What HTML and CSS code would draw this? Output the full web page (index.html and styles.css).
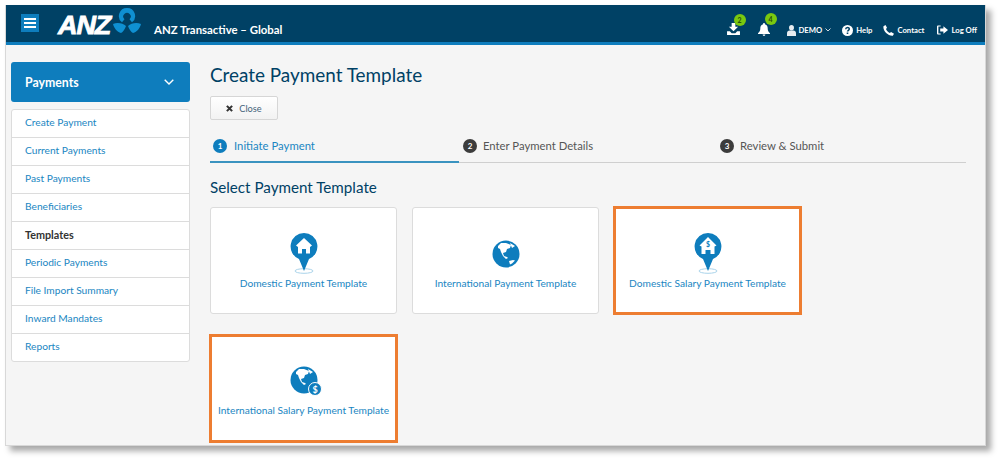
FILE: index.html
```html
<!DOCTYPE html>
<html lang="en">
<head>
<meta charset="utf-8">
<title>ANZ Transactive – Global</title>
<link rel="stylesheet" href="styles.css">
</head>
<body>
<div class="window">
  <header class="topbar">
    <div class="burger"><span></span><span></span><span></span></div>
    <div class="logo">
      <span class="logo-text">ANZ</span>
      <svg class="logo-mark" width="28" height="26" viewBox="0 0 28 26"><path fill="#0f90d2" d="M14 0a8 8 0 0 1 5 14.300l-2.500-3a3.700 3.700 0 1 0-5 0l-2.500 3A8 8 0 0 1 14 0z"/><path fill="#0f90d2" d="M0 16C4 14 10 15 13 18 12 21 10 24 8 25 4 24 1 20 0 16z"/><path fill="#0f90d2" d="M28 16C24 14 18 15 15 18 16 21 18 24 20 25 24 24 27 20 28 16z"/></svg>
    </div>
    <div class="app-name">ANZ Transactive – Global</div>
    <nav class="tools">
      <div class="tool-badged">
        <svg width="13" height="12" viewBox="0 0 14 13"><path fill="#fff" d="M5 0h4v4h3L7 9 2 4h3zM0 9h3l2 2h4l2-2h3v4H0z"/></svg>
        <span class="badge">2</span>
      </div>
      <div class="tool-badged tool-bell">
        <svg width="12" height="13" viewBox="0 0 13 14"><path fill="#fff" d="M6.500 0a1 1 0 0 1 1 1.200C10 2 10.500 4 10.500 6c0 2.500 1 3.500 2.500 5v1H0v-1c1.500-1.500 2.500-2.500 2.500-5 0-2 .5-4 3-4.800a1 1 0 0 1 1-1.200zM5 12.500h3A1.500 1.500 0 0 1 5 12.500z"/></svg>
        <span class="badge">4</span>
      </div>
      <div class="tool tool-user">
        <svg width="9" height="11" viewBox="0 0 11 12" preserveAspectRatio="none"><circle fill="#e8edf1" cx="5.500" cy="3" r="3"/><path fill="#e8edf1" d="M0 12V9c0-2 1.500-3 3-3h5c1.500 0 3 1 3 3v3z"/></svg>
        <span>DEMO</span>
        <svg class="tool-caret" width="6" height="4" viewBox="0 0 6 4"><path fill="none" stroke="#cfd9e0" d="M.5.5 3 3 5.500.5"/></svg>
      </div>
      <div class="tool tool-help">
        <svg width="11" height="11" viewBox="0 0 11 11"><circle fill="#fff" cx="5.500" cy="5.500" r="5.500"/><path fill="none" stroke="#004165" stroke-width="1.500" d="M3.700 4.300C3.800 2 7.300 2 7.300 4c0 1.300-1.800 1.300-1.800 2.600"/><rect fill="#004165" x="4.700" y="7.500" width="1.600" height="1.500"/></svg>
        <span>Help</span>
      </div>
      <div class="tool tool-contact">
        <svg width="11" height="11" viewBox="0 0 11 11"><path fill="#fff" d="M2.500 0 4 2.800 3 4c.6 1.600 2 3.100 3.800 4l1.300-1L11 8.700 9.800 10.700C5 11.200-.5 5.500.5 1.200z"/></svg>
        <span>Contact</span>
      </div>
      <div class="tool tool-logoff">
        <svg width="11" height="10" viewBox="0 0 12 10"><path fill="#fff" d="M0 1.500C0 .5.500 0 1.500 0H4v1.300H1.500v7.400H4V10H1.500C.5 10 0 9.500 0 8.500zM7 1l5 4-5 4V6.700H3.500V3.300H7z"/></svg>
        <span>Log Off</span>
      </div>
    </nav>
  </header>
  <div class="body">
    <aside class="sidebar">
      <div class="side-head">
        <span>Payments</span>
        <svg width="10" height="6" viewBox="0 0 10 6"><path fill="none" stroke="#fff" stroke-width="1.400" d="M.7.7 5 5l4.300-4.300"/></svg>
      </div>
      <ul class="side-list">
        <li>Create Payment</li>
        <li>Current Payments</li>
        <li>Past Payments</li>
        <li>Beneficiaries</li>
        <li class="current">Templates</li>
        <li>Periodic Payments</li>
        <li>File Import Summary</li>
        <li>Inward Mandates</li>
        <li>Reports</li>
      </ul>
    </aside>
    <main class="main">
      <h1 class="title">Create Payment Template</h1>
      <button class="close-btn" type="button">
        <svg width="7" height="7" viewBox="0 0 8 8"><path fill="none" stroke="#333" stroke-width="2.400" d="M1 1l6 6M7 1 1 7"/></svg>
        <span>Close</span>
      </button>
      <ol class="steps">
        <li class="step active"><span class="num">1</span>Initiate Payment</li>
        <li class="step"><span class="num">2</span>Enter Payment Details</li>
        <li class="step"><span class="num">3</span>Review &amp; Submit</li>
      </ol>
      <h2 class="subtitle">Select Payment Template</h2>
      <div class="cards">
        <a class="card">
          <svg class="pin" width="28" height="41" viewBox="0 0 28 41"><ellipse cx="14" cy="38" rx="9" ry="2.300" fill="none" stroke="#a9d3ea"/><path fill="#0e7dbd" d="M14 0a13.500 13.500 0 0 1 5 26L14 38 9 26A13.500 13.500 0 0 1 14 0z"/><path fill="#fff" d="M14 5 22 12.500 20 14v6.500h-4V16h-4v4.500H8V14l-2-1.500z"/></svg>
          <span class="card-label">Domestic Payment Template</span>
        </a>
        <a class="card">
          <svg class="globe" width="28" height="28" viewBox="0 0 28 28"><circle cx="14" cy="14" r="13.500" fill="#0e7dbd"/><path fill="#fff" d="M6 6 9 3l5 0 5 2-1 3-3 1-1 3-3 1 1 3 3 1 1 1-2 1-3-3-2-4-1-3-2-1zM18 3l5 3-3 2zM17 21l4-1 2 .5-3 3-2 1z"/></svg>
          <span class="card-label">International Payment Template</span>
        </a>
        <a class="card marked">
          <svg class="pin" width="28" height="41" viewBox="0 0 28 41"><ellipse cx="14" cy="38" rx="9" ry="2.300" fill="none" stroke="#a9d3ea"/><path fill="#0e7dbd" d="M14 0a13.500 13.500 0 0 1 5 26L14 38 9 26A13.500 13.500 0 0 1 14 0z"/><path fill="#fff" d="M14 4 22.500 12.500 20.500 13.500v7.500h-4V17h-5v4h-4v-7.500l-2-1z"/><text class="pin-dollar" x="14" y="14" text-anchor="middle">$</text></svg>
          <span class="card-label">Domestic Salary Payment Template</span>
        </a>
        <a class="card marked">
          <svg class="globe-s" width="32" height="30" viewBox="0 0 32 30"><circle cx="14" cy="14" r="13.500" fill="#0e7dbd"/><path fill="#fff" d="M6 6 9 3l5 0 5 2-1 3-3 1-1 3-3 1 1 3 3 1 1 1-2 1-3-3-2-4-1-3-2-1zM18 3l5 3-3 2z"/><circle cx="25" cy="23" r="6.500" fill="#0e7dbd" stroke="#fff"/><text class="globe-dollar" x="25" y="26.500" text-anchor="middle">$</text></svg>
          <span class="card-label">International Salary Payment Template</span>
        </a>
      </div>
    </main>
  </div>
</div>
</body>
</html>
```
FILE: styles.css
```css
* { box-sizing: border-box; }
html, body { margin: 0; padding: 0; }
body {
  width: 999px;
  height: 459px;
  overflow: hidden;
  background: #fff;
  font-family: Lato, "Open Sans", sans-serif;
  padding: 5px 0 0 5px;
}
.window {
  width: 981px;
  height: 441px;
  background: #f5f5f5;
  border: 1px solid #d8d8d8;
  border-top: 0;
  box-shadow: 5px 5px 6px #a8a8a8;
  overflow: hidden;
}
.topbar {
  height: 40px;
  background: #004165;
  border-bottom: 3px solid #0e7dbd;
  display: flex;
  align-items: center;
  color: #fff;
  padding-left: 15px;
}
.burger {
  width: 18px;
  height: 18px;
  margin-top: -2px;
  background: #0e7dbd;
  display: flex;
  flex-direction: column;
  justify-content: center;
  gap: 2px;
  padding: 0 3px;
}
.burger span { display: block; height: 2px; background: #fff; }
.logo {
  display: flex;
  align-items: flex-start;
  margin-left: 19px;
  height: 37px;
}
.logo-text {
  font: italic 700 25px/24px "Liberation Sans", sans-serif;
  -webkit-text-stroke: 0.8px #fff;
  letter-spacing: -1px;
  transform: scaleX(1.08);
  transform-origin: left;
  margin-top: 8px;
  width: 55px;
}
.logo-mark { margin-top: 3px; }
.app-name {
  margin-left: 13px;
  margin-top: 11px;
  font-size: 11.400px;
  font-weight: 700;
}
.tools {
  margin-left: auto;
  display: flex;
  align-items: center;
  font-size: 7.700px;
  font-weight: 700;
  padding-right: 8px;
  margin-top: 13px;
}
.tool-badged { position: relative; display: flex; margin: 0 18px 3px 0; }
.tool-bell { margin: 0 17px 1px 0; }
.badge {
  position: absolute;
  top: -9px;
  left: 7px;
  width: 12px;
  height: 12px;
  border-radius: 50%;
  background: #7ac80f;
  color: #27500c;
  font-size: 7px;
  line-height: 12px;
  text-align: center;
  font-weight: 700;
}
.tool-bell .badge { top: -10px; }
.tool { display: flex; align-items: center; gap: 3px; white-space: nowrap; }
.tool-help { margin-left: 11px; }
.tool-contact { margin-left: 11px; }
.tool-logoff { margin-left: 13px; }
.side-head svg { display: block; }
.body { display: flex; align-items: flex-start; }
.sidebar {
  width: 179px;
  margin: 17px 0 0 5px;
  flex: none;
}
.side-head {
  height: 40px;
  background: #0e7dbd;
  border-radius: 3px;
  color: #fff;
  font-size: 12.300px;
  font-weight: 700;
  display: flex;
  align-items: center;
  justify-content: space-between;
  padding: 0 16px 0 14px;
}
.side-list {
  list-style: none;
  margin: 7px 0 0;
  padding: 0;
  background: #fff;
  border: 1px solid #dcdcdc;
  border-radius: 3px;
}
.side-list li {
  height: 28px;
  line-height: 25px;
  padding-left: 13px;
  font-size: 10.200px;
  color: #1a86c2;
  border-bottom: 1px solid #dcdcdc;
}
.side-list li:last-child { border-bottom: 0; height: 27px; }
.side-list li.current { color: #333; font-weight: 700; font-size: 10.800px; }
.main { margin-left: 20px; width: 756px; flex: none; }
.title {
  margin: 17px 0 0;
  font-size: 18.900px;
  line-height: 26px;
  font-weight: 400;
  color: #004165;
}
.close-btn {
  display: flex;
  align-items: center;
  justify-content: center;
  gap: 6px;
  width: 68px;
  height: 24px;
  margin-top: 8px;
  padding: 0;
  background: linear-gradient(#fff, #f2f2f2);
  border: 1px solid #d6d6d6;
  border-radius: 2px;
  font: 400 9.200px Lato, sans-serif;
  color: #44637a;
}
.steps {
  list-style: none;
  display: grid;
  grid-template-columns: 249px 257px 1fr;
  margin: 11px 0 0;
  padding: 0;
  height: 32px;
  border-bottom: 1px solid #cfcfcf;
}
.step {
  display: flex;
  align-items: center;
  height: 32px;
  padding: 0 0 3px 4px;
  gap: 6px;
  font-size: 11.300px;
  color: #555;
}
.step.active { color: #1a86c2; border-bottom: 2px solid #3a93c0; padding: 0 0 1px 3px; gap: 7px; }
.num {
  width: 14px;
  height: 14px;
  border-radius: 50%;
  background: #3c3c3c;
  color: #fff;
  font-size: 8px;
  font-weight: 700;
  line-height: 14px;
  text-align: center;
}
.active .num { background: #0e7dbd; }
.subtitle {
  margin: 14px 0 0;
  font-size: 15.200px;
  line-height: 20px;
  font-weight: 400;
  color: #004165;
}
.cards {
  display: grid;
  grid-template-columns: repeat(3, 187px);
  grid-auto-rows: 107px;
  column-gap: 15px;
  row-gap: 21px;
  margin-top: 10px;
}
.card {
  position: relative;
  background: #fff;
  border: 1px solid #dcdcdc;
  border-radius: 3px;
  display: flex;
  flex-direction: column;
  align-items: center;
  color: #1a86c2;
  font-size: 10.200px;
  padding-top: 25px;
}
.card.marked { outline: 3px solid #ed7d31; outline-offset: -2px; border-radius: 0; }
.globe { margin-top: 7px; margin-bottom: 6px; }
.globe-s { margin-top: 5px; margin-bottom: 5px; margin-left: 4px; }
.card-label { display: block; margin-top: 2px; white-space: nowrap; line-height: 14px; }
.pin-dollar { font: 700 7px Lato, sans-serif; fill: #0e7dbd; }
.globe-dollar { font: 700 9px Lato, sans-serif; fill: #fff; }
```
